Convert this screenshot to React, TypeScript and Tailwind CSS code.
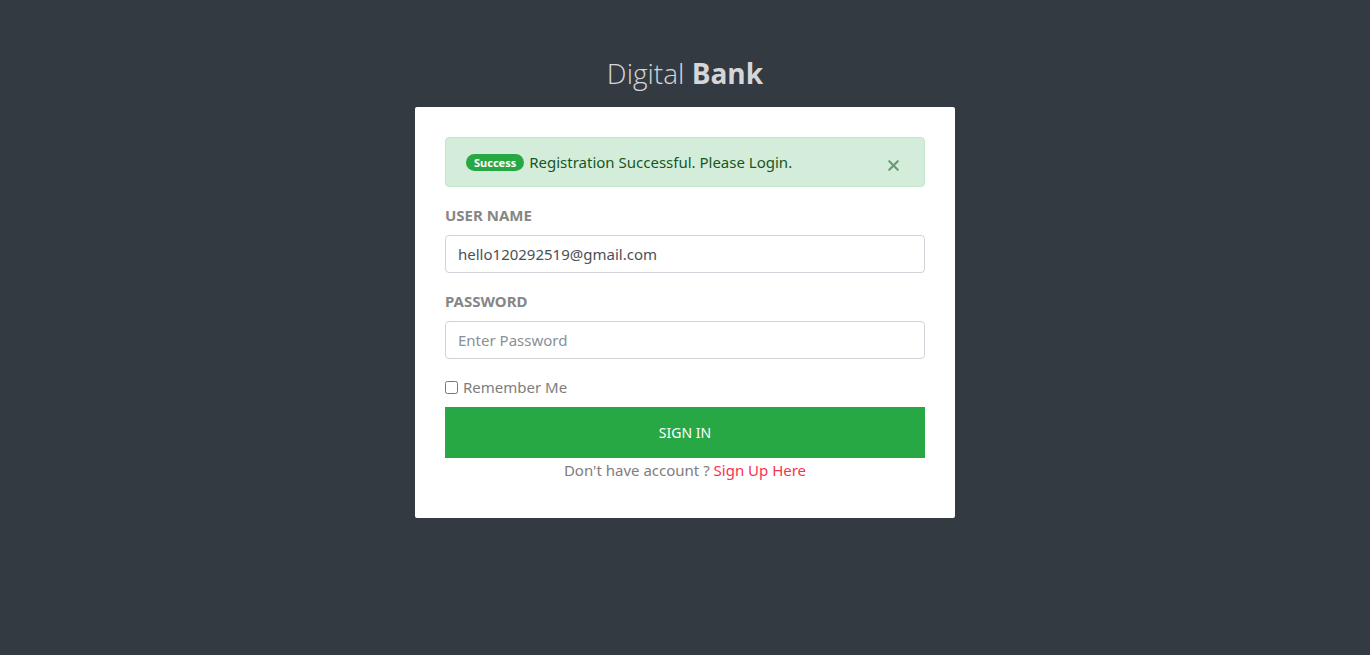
import { X } from "lucide-react"

export default function App() {
  return (
    <div
      className="min-h-[655px] w-full bg-[#343a42] flex flex-col items-center"
      style={{ fontFamily: "'Noto Sans', 'Open Sans', sans-serif" }}
    >
      <h1 className="mt-[53px] mb-[14px] text-[28px] leading-[40px] text-[#d4d6d9] font-light" style={{ fontFamily: "'Open Sans', sans-serif" }}>
        Digital <span className="font-bold">Bank</span>
      </h1>

      <div className="w-[540px] bg-white rounded-[2px] px-[30px] pt-[30px] pb-[37px]">
        <div className="flex items-center h-[50px] rounded-[4px] border border-[#c3e6cb] bg-[#d4edda] pl-[20px] pr-[22px] text-[#155724]">
          <span className="rounded-full bg-[#28a745] text-white text-[11px] font-bold px-[8px] leading-[17px] mr-[5px]">Success</span>
          <span className="text-[15px] leading-[22px]">Registration Successful. Please Login.</span>
          <X className="ml-auto mt-[6px] w-[17px] h-[17px] text-[#6a9a74]" strokeWidth={3} />
        </div>

        <label className="block mt-[17px] text-[15px] leading-[22px] font-bold text-[#868686]">USER NAME</label>
        <input
          className="block mt-[9px] w-full h-[38px] rounded-[4px] border border-[#ced4da] px-[12px] text-[15px] text-[#495057] outline-none"
          defaultValue="hello120292519@gmail.com"
        />

        <label className="block mt-[17px] text-[15px] leading-[22px] font-bold text-[#868686]">PASSWORD</label>
        <input
          type="password"
          className="block mt-[9px] w-full h-[38px] rounded-[4px] border border-[#ced4da] px-[12px] text-[15px] text-[#495057] placeholder:text-[#8a9097] outline-none"
          placeholder="Enter Password"
        />

        <label className="flex items-center mt-[17px] text-[15px] leading-[22px] text-[#7d7d7d]">
          <input type="checkbox" className="w-[13px] h-[13px] mr-[5px]" />
          Remember Me
        </label>

        <button className="block mt-[9px] w-full h-[51px] bg-[#28a745] text-white text-[14px]">SIGN IN</button>

        <p className="text-center text-[15px] leading-[22px] text-[#7d7d7d] mt-[1px]">
          Don't have account ? <a className="text-[#f8324f]">Sign Up Here</a>
        </p>
      </div>
    </div>
  )
}
